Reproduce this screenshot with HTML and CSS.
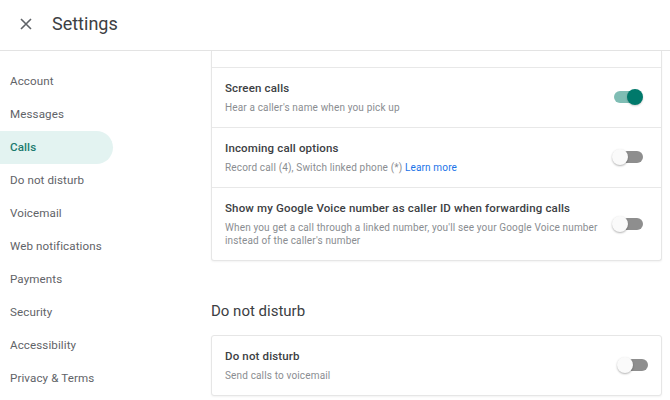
FILE: index.html
```html
<!DOCTYPE html>
<html lang="en">
<head>
<meta charset="utf-8">
<title>Settings</title>
<link rel="stylesheet" href="styles.css">
</head>
<body>
<header class="topbar">
  <button class="close" aria-label="Close">
    <svg width="12" height="12" viewBox="0 0 12 12"><path d="M1 1 L11 11 M11 1 L1 11" stroke="#5f6368" stroke-width="1.6" fill="none"/></svg>
  </button>
  <h1 class="title">Settings</h1>
</header>
<div class="layout">
  <nav class="sidebar">
    <a class="nav-item">Account</a>
    <a class="nav-item">Messages</a>
    <a class="nav-item active">Calls</a>
    <a class="nav-item">Do not disturb</a>
    <a class="nav-item">Voicemail</a>
    <a class="nav-item">Web notifications</a>
    <a class="nav-item">Payments</a>
    <a class="nav-item">Security</a>
    <a class="nav-item">Accessibility</a>
    <a class="nav-item">Privacy &amp; Terms</a>
  </nav>
  <main class="content">
    <section class="card card-top">
      <div class="row row-cut"></div>
      <div class="row">
        <div class="row-text">
          <div class="row-title">Screen calls</div>
          <div class="row-sub">Hear a caller's name when you pick up</div>
        </div>
        <span class="switch on"><span class="track"></span><span class="knob"></span></span>
      </div>
      <div class="row">
        <div class="row-text">
          <div class="row-title">Incoming call options</div>
          <div class="row-sub">Record call (4), Switch linked phone (*) <a class="link">Learn more</a></div>
        </div>
        <span class="switch"><span class="track"></span><span class="knob"></span></span>
      </div>
      <div class="row">
        <div class="row-text">
          <div class="row-title">Show my Google Voice number as caller ID when forwarding calls</div>
          <div class="row-sub">When you get a call through a linked number, you'll see your Google Voice number instead of the caller's number</div>
        </div>
        <span class="switch"><span class="track"></span><span class="knob"></span></span>
      </div>
    </section>
    <h2 class="section-heading">Do not disturb</h2>
    <section class="card">
      <div class="row row-wide">
        <div class="row-text">
          <div class="row-title">Do not disturb</div>
          <div class="row-sub">Send calls to voicemail</div>
        </div>
        <span class="switch"><span class="track"></span><span class="knob"></span></span>
      </div>
    </section>
  </main>
</div>
</body>
</html>
```
FILE: styles.css
```css
* { box-sizing: border-box; }
html, body { margin: 0; padding: 0; background: #fff; }
body {
  font-family: Roboto, "Liberation Sans", Arial, sans-serif;
  color: #3c4043;
  width: 670px;
  height: 400px;
  overflow: hidden;
}
.topbar {
  height: 51px;
  display: flex;
  align-items: center;
  border-bottom: 1px solid #e3e3e3;
  padding-left: 20px;
}
.close {
  border: 0;
  background: none;
  padding: 0;
  width: 12px;
  height: 12px;
  display: flex;
  margin-top: -2px;
}
.title {
  margin: 0 0 0 20px;
  font-size: 18px;
  font-weight: 400;
  color: #3c4043;
  line-height: 24px;
  margin-top: -3px;
}
.layout {
  display: flex;
  height: 349px;
}
.sidebar {
  width: 211px;
  flex: none;
  padding-top: 14px;
  display: flex;
  flex-direction: column;
}
.nav-item {
  display: block;
  height: 33px;
  line-height: 33px;
  padding-left: 10px;
  font-size: 11.6px;
  color: #5f6368;
  letter-spacing: 0.1px;
  width: 113px;
  border-radius: 0 17px 17px 0;
}
.nav-item.active {
  background: #e3f3f1;
  color: #1b7a6e;
  font-weight: 500;
}
.content {
  width: 451px;
  flex: none;
  display: flex;
  flex-direction: column;
}
.card {
  border: 1px solid #e6e6e6;
  border-radius: 3px;
  box-shadow: 0 1px 2px rgba(0,0,0,0.05);
  background: #fff;
}
.card-top {
  border-top: 0;
  border-top-left-radius: 0;
  border-top-right-radius: 0;
}
.row {
  display: flex;
  align-items: center;
  padding: 12px 18px 13px 13px;
  border-top: 1px solid #e8e8e8;
}
.row:first-child { border-top: 0; }
.row-cut { height: 16px; padding: 0; }
.row-wide { padding-right: 13px; }
.row-text { flex: 1; min-width: 0; }
.row-title {
  font-size: 11.5px;
  font-weight: 500;
  line-height: 16px;
  color: #3c4043;
  letter-spacing: 0.15px;
  margin-bottom: 5px;
}
.row-sub {
  font-size: 10px;
  line-height: 13px;
  color: #8a8d91;
  letter-spacing: 0.15px;
  padding-right: 8px;
}
.link { color: #1a73e8; }
.switch {
  position: relative;
  width: 31px;
  height: 16px;
  flex: none;
}
.switch .track {
  position: absolute;
  left: 2px;
  right: 0;
  top: 2px;
  height: 12px;
  border-radius: 6px;
  background: #8e8e8e;
}
.switch .knob {
  position: absolute;
  left: 0;
  top: 0;
  width: 16px;
  height: 16px;
  border-radius: 50%;
  background: #fafafa;
  box-shadow: 0 1px 2px rgba(0,0,0,0.3);
}
.switch.on .track { background: #7fbdb4; right: 4px; }
.switch.on .knob { left: auto; right: 0; background: #00796b; box-shadow: 0 1px 2px rgba(0,0,0,0.2); }
.section-heading {
  margin: 40px 0 14px 0;
  font-size: 15px;
  font-weight: 400;
  line-height: 20px;
  color: #3c4043;
}
```
